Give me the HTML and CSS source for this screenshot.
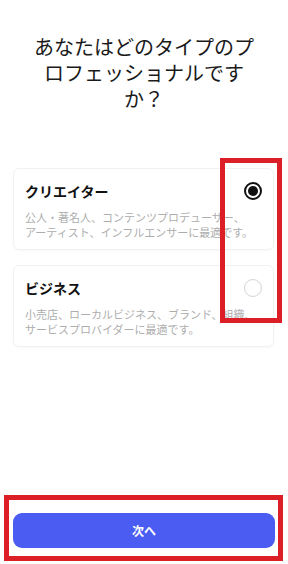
FILE: index.html
```html
<!DOCTYPE html>
<html lang="ja">
<head>
<meta charset="utf-8">
<link rel="stylesheet" href="styles.css">
</head>
<body>
<div class="page">
  <h1 class="question">あなたはどのタイプのプロフェッショナルですか？</h1>
  <div class="options">
    <div class="card">
      <div class="card-head">
        <span class="card-title">クリエイター</span>
        <span class="radio radio-on"></span>
      </div>
      <p class="card-desc">公人・著名人、コンテンツプロデューサー、アーティスト、インフルエンサーに最適です。</p>
    </div>
    <div class="card">
      <div class="card-head">
        <span class="card-title">ビジネス</span>
        <span class="radio"></span>
      </div>
      <p class="card-desc">小売店、ローカルビジネス、ブランド、組織、サービスプロバイダーに最適です。</p>
    </div>
  </div>
  <div class="footer">
    <button class="next">次へ</button>
  </div>
  <div class="mark mark-radio"></div>
  <div class="mark mark-button"></div>
</div>
</body>
</html>
```
FILE: styles.css
```css
* { box-sizing: border-box; }
html, body { margin: 0; padding: 0; background: #fff; }
body {
  font-family: "Noto Sans CJK JP", "Noto Sans", sans-serif;
  color: #111;
}
.page {
  position: relative;
  width: 288px;
  height: 564px;
  display: flex;
  flex-direction: column;
}
.question {
  margin: 34px 28px 0;
  font-size: 20px;
  line-height: 26px;
  font-weight: 400;
  text-align: center;
  color: #1a1a1a;
  line-break: strict;
}
.options {
  margin: 56px 14px 0 13px;
  display: flex;
  flex-direction: column;
  gap: 15px;
}
.card {
  border: 1px solid #f1f1f1;
  border-radius: 6px;
  padding: 13px 11px 9px 11px;
  box-shadow: 0 1px 2px rgba(0,0,0,0.03);
}
.card-head {
  display: flex;
  justify-content: space-between;
  align-items: center;
  height: 18px;
}
.card-title {
  font-size: 14px;
  font-weight: 700;
  line-height: 18px;
  color: #111;
}
.card-desc {
  margin: 10px 0 0;
  font-size: 11px;
  line-height: 15px;
  color: #adadad;
  line-break: strict;
}
.radio {
  width: 18px;
  height: 18px;
  border-radius: 50%;
  border: 1px solid #d4d4d4;
  display: flex;
  align-items: center;
  justify-content: center;
}
.radio-on {
  border: 2px solid #111;
}
.radio-on::after {
  content: "";
  width: 10px;
  height: 10px;
  border-radius: 50%;
  background: #111;
}
.footer {
  margin-top: auto;
  padding: 0 13px 16px;
}
.next {
  display: block;
  width: 100%;
  height: 35px;
  border: none;
  border-radius: 9px;
  background: #4a5cf2;
  color: #fff;
  font-family: inherit;
  font-size: 12px;
  font-weight: 700;
}
.mark {
  position: absolute;
  border: 5px solid #dc1e26;
}
.mark-radio {
  left: 220px;
  top: 158px;
  width: 62px;
  height: 165px;
}
.mark-button {
  left: 4px;
  top: 495px;
  width: 279px;
  height: 66px;
}
```
